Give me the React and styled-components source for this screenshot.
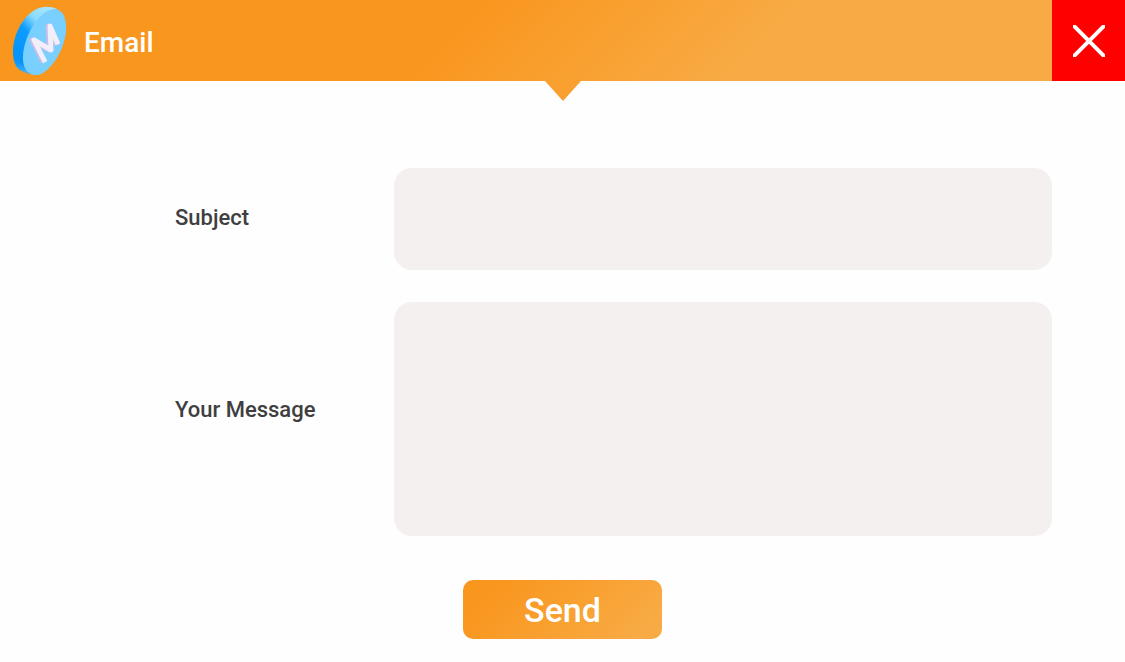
import React from "react";
import styled, { createGlobalStyle } from "styled-components";

const GlobalStyle = createGlobalStyle`
  *, *::before, *::after { box-sizing: border-box; }
  body {
    margin: 0;
    background: #fefefe;
    font-family: Roboto, "Liberation Sans", sans-serif;
    font-weight: 500;
    color: #403e3e;
  }
`;

const Header = styled.header`
  position: relative;
  display: flex;
  align-items: stretch;
  height: 81px;
  background: linear-gradient(135deg, #f9961e 40%, #f8ab44 67%);

  &::after {
    content: "";
    position: absolute;
    top: 100%;
    left: 50%;
    margin-left: -18px;
    border: 18px solid transparent;
    border-top: 20px solid #f9a030;
    border-bottom: 0;
  }
`;

const Brand = styled.div`
  flex: 1;
  display: flex;
  align-items: center;
  gap: 16px;
  padding: 0 12px;
`;

const Title = styled.h1`
  margin: 0;
  padding-top: 4px;
  font-size: 28px;
  line-height: 32px;
  font-weight: 500;
  color: #fff;
`;

const CloseButton = styled.button`
  display: flex;
  align-items: center;
  justify-content: center;
  width: 73px;
  padding: 0;
  border: 0;
  background: #fe0000;
  cursor: pointer;
`;

const Form = styled.form`
  display: flex;
  flex-direction: column;
  align-items: center;
  gap: 44px;
  padding: 87px 73px 23px 175px;
`;

const Fields = styled.div`
  display: flex;
  flex-direction: column;
  align-self: stretch;
  gap: 32px;
`;

const Field = styled.div`
  display: grid;
  grid-template-columns: 1fr 3fr;
  align-items: center;
`;

const Label = styled.label`
  padding-bottom: ${({ $raised }) => ($raised ? "18px" : "2px")};
  font-size: 22px;
  line-height: 28px;
`;

const inputLook = `
  display: block;
  width: 100%;
  min-width: 0;
  padding: 16px 24px;
  border: 0;
  border-radius: 18px;
  background: #f4f0f0;
  color: inherit;
  font: inherit;
  font-size: 22px;
  outline: none;
`;

const TextInput = styled.input`
  ${inputLook}
  height: 102px;
`;

const MessageInput = styled.textarea`
  ${inputLook}
  height: 234px;
  resize: none;
`;

const Actions = styled.div`
  display: flex;
  justify-content: center;
  align-self: stretch;
  margin: 0 -73px 0 -175px;
`;

const SendButton = styled.button`
  width: 199px;
  height: 59px;
  padding: 0;
  border: 0;
  border-radius: 10px;
  background: linear-gradient(135deg, #f9961e 15%, #f8ab44 90%);
  color: #fff;
  font: inherit;
  font-size: 34px;
  line-height: 40px;
  cursor: pointer;
`;

function CoinLogo() {
  return (
    <svg width="56" height="70" viewBox="12 6 56 70" aria-hidden="true">
      <defs>
        <linearGradient id="edge" x1="0.7" y1="0" x2="0.2" y2="0.7">
          <stop offset="0" stopColor="#a5e4ff" />
          <stop offset="0.3" stopColor="#8bdcff" />
          <stop offset="0.6" stopColor="#0d9cff" />
          <stop offset="1" stopColor="#0895fa" />
        </linearGradient>
        <linearGradient id="rim" x1="0" y1="0" x2="0" y2="1">
          <stop offset="0" stopColor="#0895fa" stopOpacity="0" />
          <stop offset="1" stopColor="#55b9f8" />
        </linearGradient>
      </defs>
      <path d="M57 9C50 6 42 6 35 10C22 17 13 36 13 52C13 61 16 67 20 70L29 74L46 42Z" fill="url(#edge)" />
      <path d="M13 58C14 65 17 68 20 70L29 74L25 66Z" fill="url(#rim)" />
      <path d="M56 9C64 11 67 20 66 32C64 49 54 66 43 73C36 77 28 75 25 68C21 60 23 46 29 33C36 18 47 8 56 9Z" fill="#79d0ff" />
      <path d="M42 60L32 40L49 50L48 26L56 43" fill="none" stroke="#c9bce8" strokeWidth="5" strokeLinecap="square" strokeLinejoin="round" />
      <path d="M44 60L34 40L51 50L50 26L57 42" fill="none" stroke="#f2eefa" strokeWidth="5" strokeLinecap="square" strokeLinejoin="round" />
    </svg>
  );
}

function CloseIcon() {
  return (
    <svg width="32" height="32" viewBox="0 0 32 32" aria-hidden="true">
      <path d="M0 0L32 32M32 0L0 32" stroke="#fff" strokeWidth="4" />
    </svg>
  );
}

export default function App() {
  return (
    <>
      <GlobalStyle />
      <Header>
        <Brand>
          <CoinLogo />
          <Title>Email</Title>
        </Brand>
        <CloseButton type="button" aria-label="Close">
          <CloseIcon />
        </CloseButton>
      </Header>
      <main>
        <Form onSubmit={(event) => event.preventDefault()}>
          <Fields>
            <Field>
              <Label htmlFor="subject">Subject</Label>
              <TextInput id="subject" name="subject" type="text" />
            </Field>
            <Field>
              <Label htmlFor="message" $raised>Your Message</Label>
              <MessageInput id="message" name="message" />
            </Field>
          </Fields>
          <Actions>
            <SendButton type="submit">Send</SendButton>
          </Actions>
        </Form>
      </main>
    </>
  );
}
